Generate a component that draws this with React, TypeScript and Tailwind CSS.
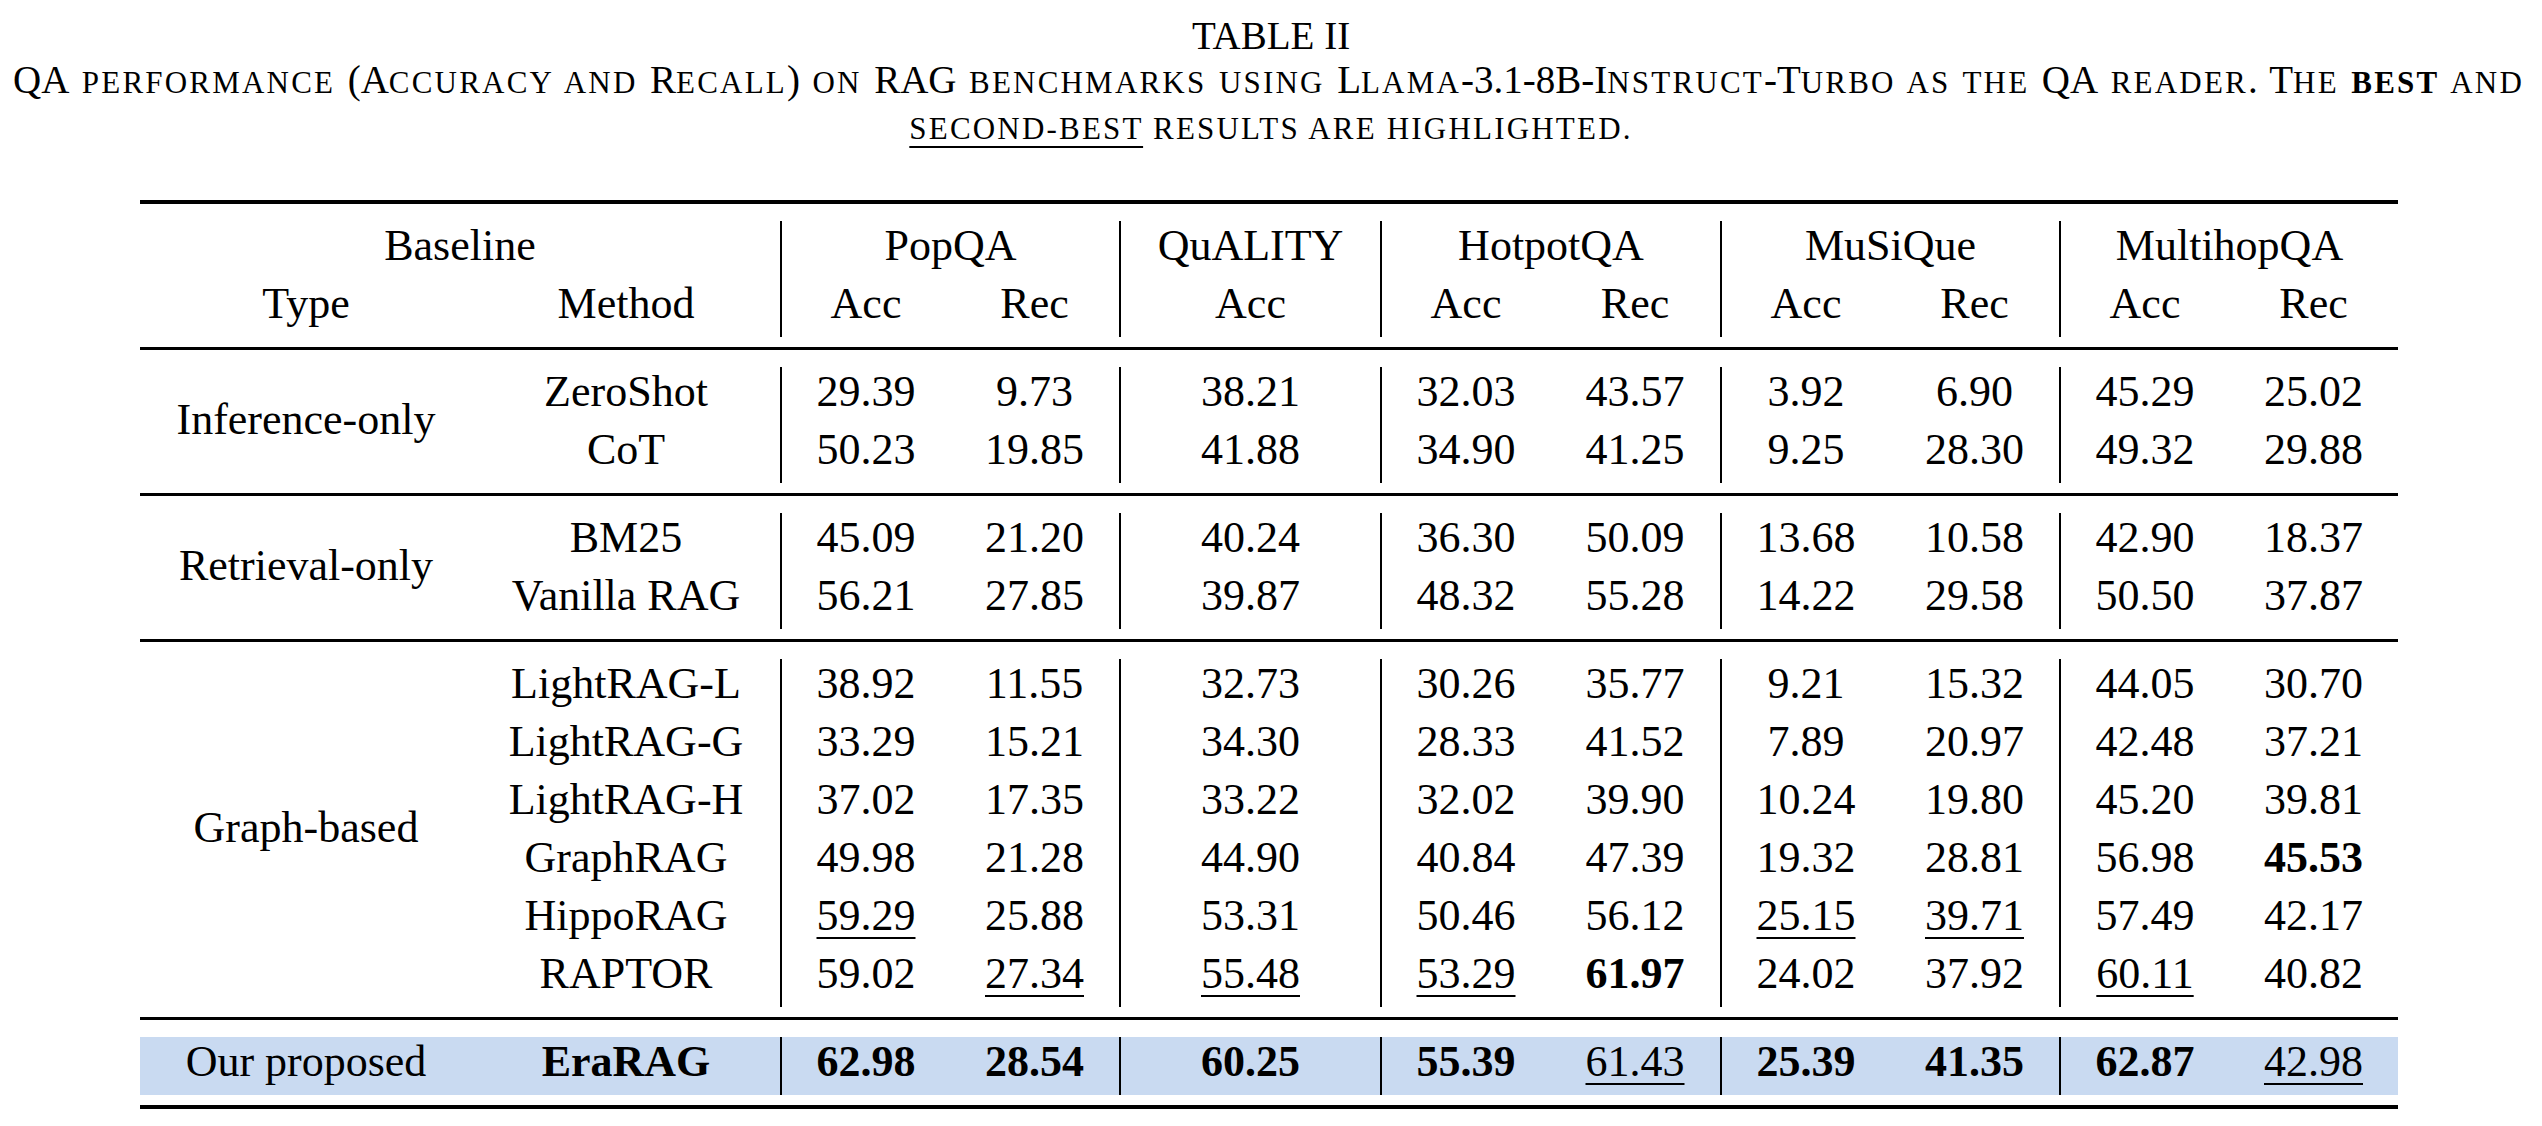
import React from "react";

const GRID =
  "grid grid-cols-[332px_308px_170px_169px_261px_170px_170px_170px_169px_170px_169px] auto-rows-[58px]";

const BL = [false, false, true, false, true, true, false, true, false, true, false];

function Num({ v }: { v: string }) {
  if (v.startsWith("*")) return <span className="font-bold">{v.slice(1)}</span>;
  if (v.startsWith("_"))
    return (
      <span className="underline decoration-2 underline-offset-[7px]">{v.slice(1)}</span>
    );
  return <span>{v}</span>;
}

function Cell({ j, children }: { j: number; children: React.ReactNode }) {
  return (
    <div
      className={
        "h-[58px] text-center leading-[50px] whitespace-nowrap " +
        (BL[j] ? "border-l-2 border-black" : "")
      }
    >
      {children}
    </div>
  );
}

const SPAN: Record<number, string> = {
  1: "row-span-1",
  2: "row-span-2",
  6: "row-span-6",
};

type Row = { m: string; mb?: boolean; v: string[] };

function Block({ type, rows, blue }: { type: string; rows: Row[]; blue?: boolean }) {
  const n = rows.length;
  return (
    <div className={GRID + (blue ? " bg-[#c9daf1]" : "")}>
      {n > 1 ? (
        <div
          className={
            SPAN[n] + " flex items-center justify-center pb-[11px] leading-[50px] whitespace-nowrap"
          }
        >
          {type}
        </div>
      ) : (
        <Cell j={0}>{type}</Cell>
      )}
      {rows.map((r, i) => (
        <React.Fragment key={i}>
          <Cell j={1}>{r.mb ? <span className="font-bold">{r.m}</span> : r.m}</Cell>
          {r.v.map((v, k) => (
            <Cell key={k} j={k + 2}>
              <Num v={v} />
            </Cell>
          ))}
        </React.Fragment>
      ))}
    </div>
  );
}

function Heavy() {
  return <div className="h-[4px] bg-black" />;
}
function Light() {
  return <div className="h-[3px] bg-black" />;
}

function S({ children }: { children: React.ReactNode }) {
  return <span className="text-[31px] uppercase tracking-[2.2px]">{children}</span>;
}

export default function App() {
  return (
    <div className="w-[2542px] h-[1126px] bg-white text-black font-['Liberation_Serif','Times_New_Roman',serif] overflow-hidden">
      <div className="h-[200px] pt-[14px] text-[39px] leading-[43.5px] whitespace-nowrap">
        <div className="text-center">TABLE II</div>
        <div className="ml-[13px] w-[2511px] text-justify [text-align-last:justify]">
          QA<S> performance </S>(A<S>ccuracy and </S>R<S>ecall</S>)<S> on </S>RAG
          <S> benchmarks using </S>L<S>lama</S>-3.1-8B-I<S>nstruct</S>-T<S>urbo</S>
          <S> as the </S>QA<S> reader</S>. T<S>he </S>
          <span className="font-bold">
            <S>best</S>
          </span>
          <S> and</S>
        </div>
        <div className="text-center">
          <span className="underline decoration-2 underline-offset-[7px]">
            <S>second-best</S>
          </span>
          <S> results are highlighted.</S>
        </div>
      </div>

      <div className="ml-[140px] w-[2258px] text-[44px]">
        <Heavy />
        <div className="mt-[17px]">
          <div className={GRID}>
            <div className="col-span-2 h-[58px] text-center leading-[50px]">Baseline</div>
            <div className="col-span-2 h-[58px] text-center leading-[50px] border-l-2 border-black">PopQA</div>
            <div className="h-[58px] text-center leading-[50px] border-l-2 border-black">QuALITY</div>
            <div className="col-span-2 h-[58px] text-center leading-[50px] border-l-2 border-black">HotpotQA</div>
            <div className="col-span-2 h-[58px] text-center leading-[50px] border-l-2 border-black">MuSiQue</div>
            <div className="col-span-2 h-[58px] text-center leading-[50px] border-l-2 border-black">MultihopQA</div>
            {["Type", "Method", "Acc", "Rec", "Acc", "Acc", "Rec", "Acc", "Rec", "Acc", "Rec"].map(
              (h, j) => (
                <Cell key={j} j={j}>
                  {h}
                </Cell>
              )
            )}
          </div>
        </div>
        <div className="mt-[10px]">
          <Light />
        </div>
        <div className="mt-[17px]">
          <Block
            type="Inference-only"
            rows={[
              { m: "ZeroShot", v: ["29.39", "9.73", "38.21", "32.03", "43.57", "3.92", "6.90", "45.29", "25.02"] },
              { m: "CoT", v: ["50.23", "19.85", "41.88", "34.90", "41.25", "9.25", "28.30", "49.32", "29.88"] },
            ]}
          />
        </div>
        <div className="mt-[10px]">
          <Light />
        </div>
        <div className="mt-[17px]">
          <Block
            type="Retrieval-only"
            rows={[
              { m: "BM25", v: ["45.09", "21.20", "40.24", "36.30", "50.09", "13.68", "10.58", "42.90", "18.37"] },
              { m: "Vanilla RAG", v: ["56.21", "27.85", "39.87", "48.32", "55.28", "14.22", "29.58", "50.50", "37.87"] },
            ]}
          />
        </div>
        <div className="mt-[10px]">
          <Light />
        </div>
        <div className="mt-[17px]">
          <Block
            type="Graph-based"
            rows={[
              { m: "LightRAG-L", v: ["38.92", "11.55", "32.73", "30.26", "35.77", "9.21", "15.32", "44.05", "30.70"] },
              { m: "LightRAG-G", v: ["33.29", "15.21", "34.30", "28.33", "41.52", "7.89", "20.97", "42.48", "37.21"] },
              { m: "LightRAG-H", v: ["37.02", "17.35", "33.22", "32.02", "39.90", "10.24", "19.80", "45.20", "39.81"] },
              { m: "GraphRAG", v: ["49.98", "21.28", "44.90", "40.84", "47.39", "19.32", "28.81", "56.98", "*45.53"] },
              { m: "HippoRAG", v: ["_59.29", "25.88", "53.31", "50.46", "56.12", "_25.15", "_39.71", "57.49", "42.17"] },
              { m: "RAPTOR", v: ["59.02", "_27.34", "_55.48", "_53.29", "*61.97", "24.02", "37.92", "_60.11", "40.82"] },
            ]}
          />
        </div>
        <div className="mt-[10px]">
          <Light />
        </div>
        <div className="mt-[17px]">
          <Block
            type="Our proposed"
            blue
            rows={[
              {
                m: "EraRAG",
                mb: true,
                v: ["*62.98", "*28.54", "*60.25", "*55.39", "_61.43", "*25.39", "*41.35", "*62.87", "_42.98"],
              },
            ]}
          />
        </div>
        <div className="mt-[10px]">
          <Heavy />
        </div>
      </div>
    </div>
  );
}
